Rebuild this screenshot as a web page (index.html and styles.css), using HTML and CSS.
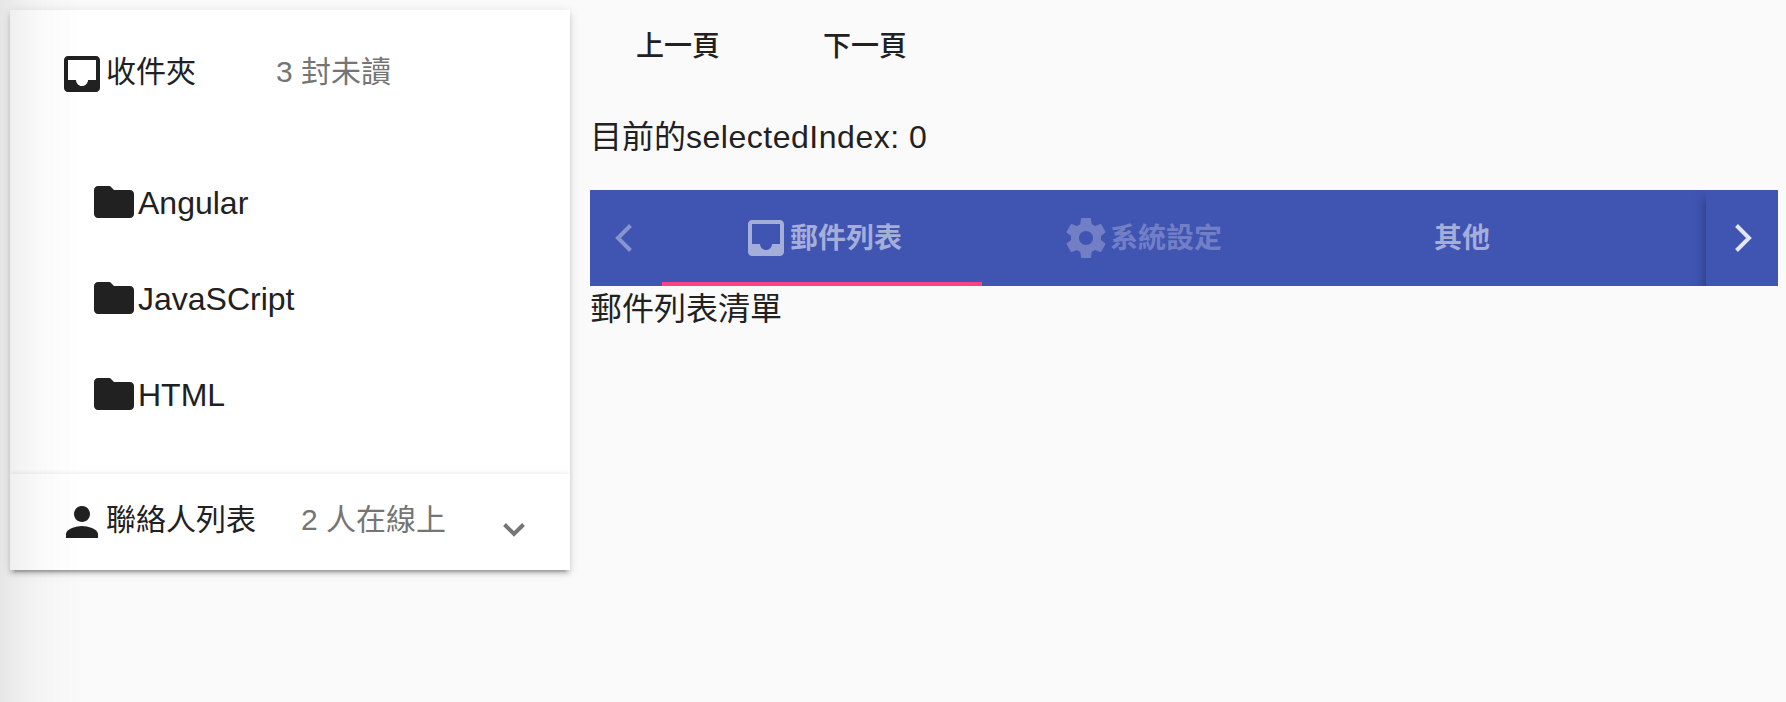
FILE: index.html
```html
<!DOCTYPE html>
<html lang="zh-Hant">
<head>
<meta charset="utf-8">
<title>Mail</title>
<link rel="stylesheet" href="styles.css">
</head>
<body>
<svg width="0" height="0" class="defs">
  <symbol id="inbox" viewBox="0 0 24 24"><path d="M19 3H4.99C3.88 3 3 3.9 3 5v14c0 1.1.88 2 1.99 2H19c1.1 0 2-.9 2-2V5c0-1.1-.9-2-2-2zm0 12h-4c0 1.66-1.34 3-3 3s-3-1.34-3-3H5V5h14v10z"/></symbol>
  <symbol id="folder" viewBox="0 0 24 24"><path d="M10 4H4c-1.1 0-1.99.9-1.99 2L2 18c0 1.1.9 2 2 2h16c1.1 0 2-.9 2-2V8c0-1.1-.9-2-2-2h-8l-2-2z"/></symbol>
  <symbol id="person" viewBox="0 0 24 24"><path d="M12 12c2.21 0 4-1.79 4-4s-1.79-4-4-4-4 1.79-4 4 1.79 4 4 4zm0 2c-2.67 0-8 1.34-8 4v2h16v-2c0-2.66-5.33-4-8-4z"/></symbol>
  <symbol id="settings" viewBox="0 0 24 24"><path d="M19.43 12.98c.04-.32.07-.64.07-.98s-.03-.66-.07-.98l2.11-1.65c.19-.15.24-.42.12-.64l-2-3.46c-.12-.22-.39-.3-.61-.22l-2.49 1c-.52-.4-1.08-.73-1.69-.98l-.38-2.65C14.46 2.18 14.25 2 14 2h-4c-.25 0-.46.18-.49.42l-.38 2.65c-.61.25-1.17.59-1.69.98l-2.49-1c-.23-.09-.49 0-.61.22l-2 3.46c-.13.22-.07.49.12.64l2.11 1.65c-.04.32-.07.65-.07.98s.03.66.07.98l-2.11 1.65c-.19.15-.24.42-.12.64l2 3.46c.12.22.39.3.61.22l2.49-1c.52.4 1.08.73 1.69.98l.38 2.65c.03.24.24.42.49.42h4c.25 0 .46-.18.49-.42l.38-2.65c.61-.25 1.17-.59 1.69-.98l2.49 1c.23.09.49 0 .61-.22l2-3.46c.12-.22.07-.49-.12-.64l-2.11-1.65zM12 15.500c-1.93 0-3.500-1.57-3.500-3.500s1.57-3.500 3.500-3.500 3.500 1.57 3.500 3.500-1.57 3.500-3.500 3.500z"/></symbol>
</svg>
<div class="page">
  <aside class="accordion">
    <section class="panel">
      <header class="panel-header expanded">
        <svg class="icon"><use href="#inbox"/></svg>
        <span class="title">收件夾</span>
        <span class="description">3 封未讀</span>
      </header>
      <ul class="list">
        <li><svg class="icon"><use href="#folder"/></svg><span class="label">Angular</span></li>
        <li><svg class="icon"><use href="#folder"/></svg><span class="label">JavaSCript</span></li>
        <li><svg class="icon"><use href="#folder"/></svg><span class="label">HTML</span></li>
      </ul>
    </section>
    <section class="panel">
      <header class="panel-header">
        <svg class="icon"><use href="#person"/></svg>
        <span class="title wide">聯絡人列表</span>
        <span class="description">2 人在線上</span>
        <svg class="toggle" viewBox="0 0 22 14"><path d="M1.500 1.500 11 11 20.500 1.500"/></svg>
      </header>
    </section>
  </aside>
  <main class="content">
    <div class="buttons">
      <button>上一頁</button>
      <button>下一頁</button>
    </div>
    <p class="status">目前的<span class="latin">selectedIndex: 0</span></p>
    <nav class="tabs">
      <div class="pager prev"><svg viewBox="0 0 18 28"><path d="M15.500 1.500 3 14 15.500 26.500"/></svg></div>
      <div class="tab-list">
        <div class="tab active"><svg class="icon"><use href="#inbox"/></svg><span class="label">郵件列表</span></div>
        <div class="tab disabled"><svg class="icon"><use href="#settings"/></svg><span class="label">系統設定</span></div>
        <div class="tab"><span class="label">其他</span></div>
      </div>
      <div class="pager next"><svg viewBox="0 0 18 28"><path d="M2.500 1.500 15 14 2.500 26.500"/></svg></div>
    </nav>
    <p class="tab-body">郵件列表清單</p>
  </main>
</div>
<div class="drawer-shadow"></div>
</body>
</html>
```
FILE: styles.css
```css
* { box-sizing: border-box; }
body {
  margin: 0;
  height: 702px;
  overflow: hidden;
  background: #fafafa;
  color: #212121;
  font: 32px/48px "Liberation Sans", "Noto Sans CJK TC", sans-serif;
}
.defs { position: absolute; }
.page { display: flex; gap: 20px; padding: 10px 8px 0 10px; }
.icon { width: 48px; height: 48px; flex: none; fill: currentColor; }
.label { margin-top: 2px; }

.accordion {
  width: 560px;
  height: 560px;
  flex: none;
  background: #fff;
  box-shadow: 0 6px 2px -4px rgba(0,0,0,.2), 0 4px 4px 0 rgba(0,0,0,.14), 0 2px 10px 0 rgba(0,0,0,.12);
}
.panel + .panel { box-shadow: 0 -2px 4px -1px rgba(0,0,0,.08); clip-path: inset(-8px 0 0 0); }
.panel-header {
  display: flex;
  align-items: center;
  height: 96px;
  padding: 0 45px 0 48px;
  font-size: 30px;
}
.panel-header.expanded { height: 128px; }
.title { width: 170px; margin-top: -4px; }
.title.wide { width: 195px; }
.description { flex: 1; margin-top: -4px; color: #757575; }
.toggle { width: 22px; height: 14px; margin-top: 16px; fill: none; stroke: #757575; stroke-width: 4; }
.list { list-style: none; margin: 0; padding: 16px 0 32px; }
.list li { display: flex; align-items: center; height: 96px; padding-left: 80px; }

.content { flex: 1; min-width: 0; }
.buttons { display: flex; gap: 11px; }
button {
  width: 176px;
  height: 72px;
  padding: 0 0 3px;
  border: 0;
  background: transparent;
  color: #212121;
  font: 500 28px/69px "Noto Sans CJK TC", sans-serif;
}
.status { margin: 31px 0 29px; }
.latin { letter-spacing: .52px; }
.tabs { display: flex; height: 96px; background: #4055b2; color: #fff; }
.tab-list { display: flex; flex: 1; min-width: 0; }
.tab {
  display: flex;
  align-items: center;
  justify-content: center;
  width: 320px;
  font-size: 28px;
  font-weight: 700;
  color: #a5add9;
}
.tab.active { box-shadow: inset 0 -4px #ff4081; }
.tab.disabled { color: #727fc6; }
.pager { display: flex; align-items: center; justify-content: center; width: 72px; flex: none; }
.pager svg { width: 18px; height: 28px; fill: none; stroke: #e4e6f3; stroke-width: 4; }
.prev svg { margin-left: -4px; stroke: #8994cf; }
.next svg { margin-left: 2px; }
.next { box-shadow: -2px 8px 10px rgba(0,0,0,.28); clip-path: inset(0 0 0 -20px); }
.tab-body { margin: 0; line-height: 46px; }

/* Soft edge shadow cast by the closed drawer */
.drawer-shadow {
  position: fixed;
  top: 0;
  left: 0;
  width: 84px;
  height: 702px;
  background: linear-gradient(90deg, rgba(0,0,0,.08), rgba(0,0,0,.062) 10px, rgba(0,0,0,.048) 19px, rgba(0,0,0,.028) 35px, rgba(0,0,0,.015) 50px, rgba(0,0,0,.007) 65px, transparent);
  pointer-events: none;
}
```
